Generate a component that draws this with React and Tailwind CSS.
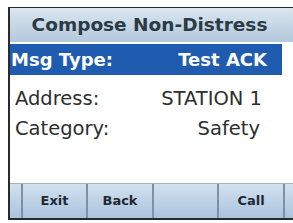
export default function App() {
  const font = { fontFamily: '"DejaVu Sans", Verdana, sans-serif' };
  const keys = [
    { l: 'Exit', w: 'w-[65px]' },
    { l: 'Back', w: 'w-[66px]' },
    { l: '', w: 'w-[65px]' },
    { l: 'Call', w: 'w-[66px]' },
  ];
  return (
    <div className="w-[293px] h-[223px] bg-white relative overflow-hidden" style={font}>
      <div className="ml-[8px] mt-[7px] w-[285px] h-[213px] border-l-2 border-t border-b-2 border-[#2a2a2a] flex flex-col bg-white">
        {/* header */}
        <div className="h-[34px] bg-gradient-to-b from-[#dbe6f0] via-[#c6d7e6] to-[#b3c9dc] flex items-center justify-center pr-[4px]">
          <span className="text-[18.5px] font-bold text-[#2b3a44]">Compose Non-Distress</span>
        </div>
        {/* selected row */}
        <div className="mt-[2px] mr-[11px] h-[31px] bg-[#1f5cb0] flex items-center justify-between pl-[1px] pr-[15px] text-white text-[18px] font-bold">
          <span>Msg Type:</span>
          <span>Test ACK</span>
        </div>
        <div className="mt-[9px] mr-[31px] h-[30px] flex items-center justify-between pl-[5px] text-[#2e2e2e] text-[19.5px]">
          <span>Address:</span>
          <span>STATION 1</span>
        </div>
        <div className="mr-[33px] h-[30px] flex items-center justify-between pl-[5px] text-[#2e2e2e] text-[19.5px]">
          <span>Category:</span>
          <span>Safety</span>
        </div>
        <div className="flex-1" />
        {/* soft keys */}
        <div className="h-[35px] border-t border-[#a9b3bd] bg-gradient-to-b from-[#d3e1ee] to-[#a9c3de] flex">
          <div className="w-[11px]" />
          {keys.map((k, i) => (
            <div
              key={i}
              className={`${k.w} border-l-2 border-[#7d91a6] flex items-center justify-center text-[13px] font-bold text-[#1e2a33]`}
            >
              {k.l}
            </div>
          ))}
          <div className="flex-1 border-l-2 border-[#7d91a6]" />
        </div>
      </div>
    </div>
  );
}
